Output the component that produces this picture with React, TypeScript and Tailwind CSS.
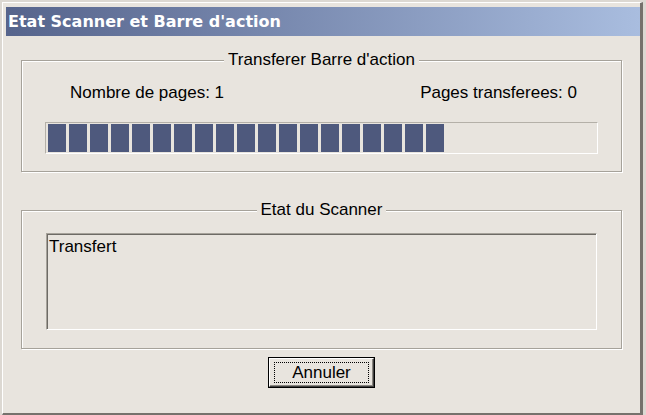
import React from 'react';

const GroupBox: React.FC<{ title: string; className?: string; children: React.ReactNode }> = ({ title, className = '', children }) => (
  <div className={`relative border border-[#a6a29a] shadow-[inset_1px_1px_0_#ffffff,1px_1px_0_#ffffff] ${className}`}>
    {/* legend sits over the etched top line */}
    <div className="absolute -top-[11px] left-0 right-0 flex justify-center">
      <span className="bg-[#e8e4de] px-[4px] leading-[20px]">{title}</span>
    </div>
    {children}
  </div>
);

export default function App() {
  const blocks = Array.from({ length: 19 });

  return (
    <div className="w-[646px] h-[415px] bg-[#dcd8d2] overflow-hidden font-['Liberation_Sans',Arial,sans-serif] text-[17px] text-black">
      <div className="ml-[2px] mt-[2px] w-[641px] h-[413px] bg-[#e8e4de] border-t border-l border-white border-r-[3px] border-b-[2px] border-r-[#75716c] border-b-[#75716c] pt-[4px] pl-[3px]">
        {/* Title bar */}
        <div className="h-[29px] w-[634px] bg-linear-to-r from-[#56648c] to-[#a9bddf] flex items-center pl-[2px]">
          <span className="font-['DejaVu_Sans',sans-serif] font-bold text-[16px] text-white leading-none pt-[1px]">
            Etat Scanner et Barre d'action
          </span>
        </div>

        <div className="ml-[15px] w-[601px] flex flex-col">
          <GroupBox title="Transferer Barre d'action" className="mt-[24px] h-[112px] pt-[22px] pl-[23px]">
            <div className="w-[553px] flex justify-between pl-[25px] pr-[21px] leading-[20px]">
              <span>Nombre de pages: 1</span>
              <span>Pages transferees: 0</span>
            </div>
            <div className="mt-[19px] w-[553px] h-[32px] border border-t-[#b4b0a8] border-l-[#b4b0a8] border-b-white border-r-white flex items-center gap-[3px] pl-[2px]">
              {blocks.map((_, i) => (
                <div key={i} className="w-[18px] h-[28px] bg-[#4e597d]" />
              ))}
            </div>
          </GroupBox>

          <GroupBox title="Etat du Scanner" className="mt-[38px] h-[139px] pt-[22px] pl-[24px]">
            <div className="w-[551px] h-[97px] border border-t-[#a6a29a] border-l-[#a6a29a] border-b-white border-r-white shadow-[inset_1px_1px_0_#6d6a65] pt-[3px] pl-[2px] leading-[20px]">
              Transfert
            </div>
          </GroupBox>

          <div className="mt-[8px] flex justify-center">
            <button className="w-[107px] h-[31px] border border-black bg-[#e8e4de] p-0">
              <div className="w-full h-full border border-t-white border-l-white border-b-[#404040] border-r-[#404040] shadow-[inset_-1px_-1px_0_#8a8680] px-[4px] py-[3px]">
                <div className="w-full h-full border border-dotted border-black flex items-center justify-center leading-none">
                  Annuler
                </div>
              </div>
            </button>
          </div>
        </div>
      </div>
    </div>
  );
}
